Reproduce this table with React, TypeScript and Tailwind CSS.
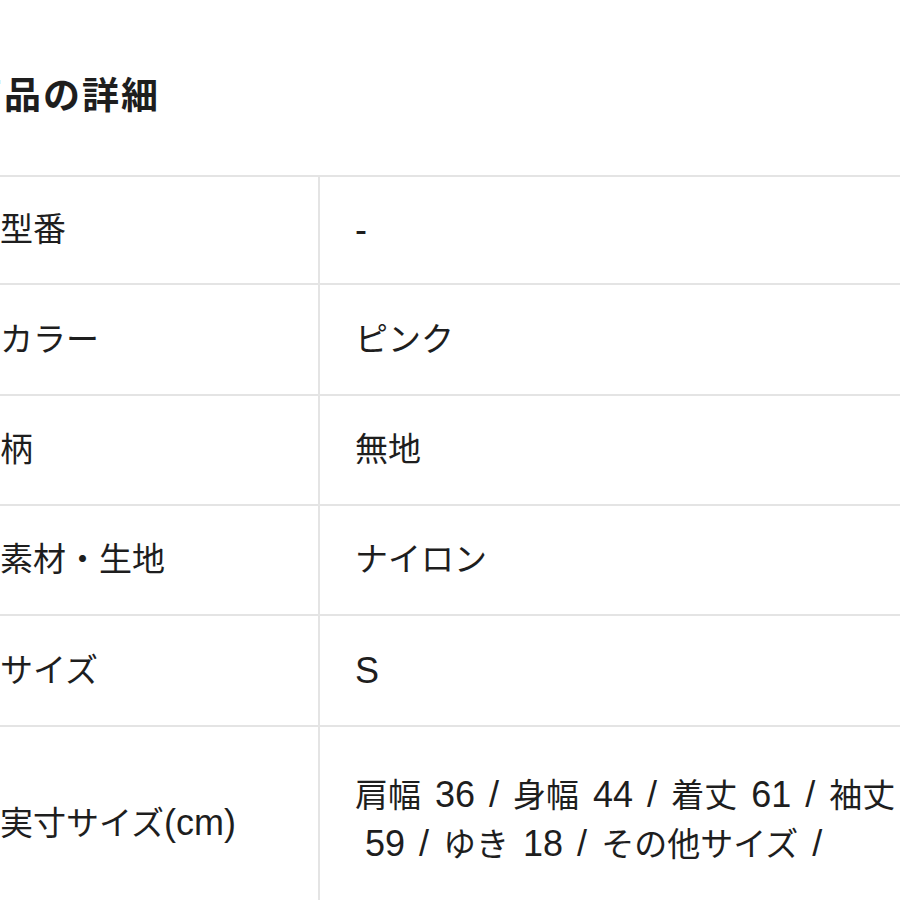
import { Fragment } from 'react'

const rows: { label: string; value: string; h: string }[] = [
  { label: '型番', value: '-', h: 'h-[108px]' },
  { label: 'カラー', value: 'ピンク', h: 'h-[111px]' },
  { label: '柄', value: '無地', h: 'h-[110px]' },
  { label: '素材・生地', value: 'ナイロン', h: 'h-[110px]' },
  { label: 'サイズ', value: 'S', h: 'h-[111px]' },
]

// latin runs are set a little larger and looser, the way the original font draws them
function Mixed({ text }: { text: string }) {
  const parts = text.split(/([\x20-\x7e]+)/)
  return (
    <>
      {parts.map((p, i) =>
        /[\x20-\x7e]/.test(p) ? (
          <span key={i} className="text-[36px] [word-spacing:4px]">
            {p}
          </span>
        ) : (
          <Fragment key={i}>{p}</Fragment>
        )
      )}
    </>
  )
}

export default function App() {
  return (
    <div
      className="w-[900px] h-[900px] overflow-hidden bg-white text-[#1e1e1e]"
      style={{ fontFamily: '"Liberation Sans", "Noto Sans CJK JP", sans-serif' }}
    >
      <div className="ml-[-36px] w-[1000px]">
        <h2 className="h-[175px] pt-[73px] pl-[1px] text-[37px] leading-[48px] font-bold tracking-[2px]">
          商品の詳細
        </h2>

        <div className="border-t-2 border-[#e4e4e4]">
          {rows.map((row) => (
            <div key={row.label} className={`flex border-b-2 border-[#e4e4e4] ${row.h}`}>
              <div className="w-[356px] shrink-0 flex items-center pl-[36px] border-r-2 border-[#e4e4e4] text-[33px]">
                <Mixed text={row.label} />
              </div>
              <div className="flex-1 flex items-center pl-[35px] text-[33px]">
                <Mixed text={row.value} />
              </div>
            </div>
          ))}

          <div className="flex border-b-2 border-[#e4e4e4]">
            <div className="w-[356px] shrink-0 flex items-center pl-[36px] pt-[6px] border-r-2 border-[#e4e4e4] text-[33px] leading-[48px]">
              <span>
                <Mixed text="実寸サイズ(cm)" />
              </span>
            </div>
            <div className="flex-1 pl-[35px] pt-[44px] pb-[44px] text-[33px] leading-[48px] whitespace-pre">
              <div>
                <Mixed text="肩幅 36 / 身幅 44 / 着丈 61 / 袖丈" />
              </div>
              <div className="-ml-[4px]">
                <Mixed text=" 59 / ゆき 18 / その他サイズ /" />
              </div>
            </div>
          </div>
        </div>
      </div>
    </div>
  )
}
